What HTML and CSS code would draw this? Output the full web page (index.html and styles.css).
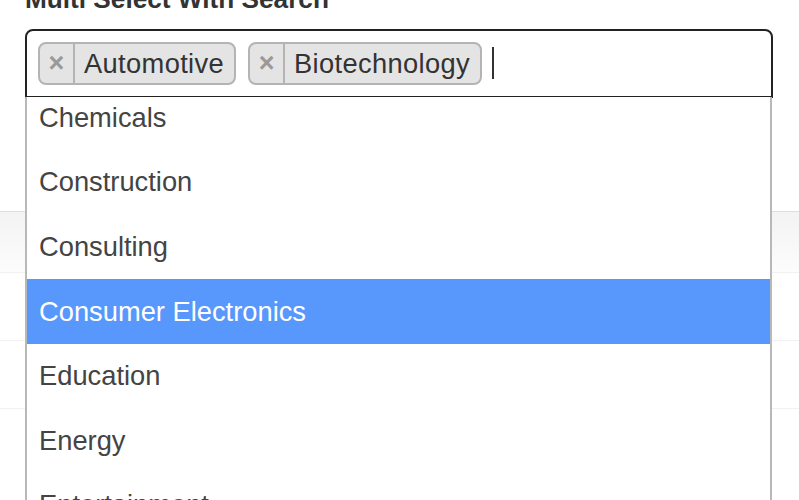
FILE: index.html
```html
<!DOCTYPE html>
<html lang="en">
<head>
<meta charset="utf-8">
<title>Multi Select With Search</title>
<link rel="stylesheet" href="styles.css">
</head>
<body>
<div class="page">
  <label class="field-label">Multi Select With Search</label>
  <div class="select">
    <div class="selection">
      <span class="chip"><span class="chip-remove">×</span><span class="chip-text">Automotive</span></span>
      <span class="chip"><span class="chip-remove">×</span><span class="chip-text">Biotechnology</span></span>
      <span class="caret"></span>
    </div>
    <div class="dropdown">
      <ul class="options">
        <li class="option">Chemicals</li>
        <li class="option">Construction</li>
        <li class="option">Consulting</li>
        <li class="option highlighted">Consumer Electronics</li>
        <li class="option">Education</li>
        <li class="option">Energy</li>
        <li class="option">Entertainment</li>
      </ul>
    </div>
  </div>
  <div class="table">
    <div class="row head"></div>
    <div class="row"></div>
    <div class="row"></div>
    <div class="row"></div>
  </div>
</div>
</body>
</html>
```

FILE: styles.css
```css
html, body {
  margin: 0;
  padding: 0;
  background: #fff;
  overflow: hidden;
}
body {
  font-family: "Liberation Sans", Arial, sans-serif;
  color: #333;
  width: 799px;
  height: 500px;
}
.page {
  position: relative;
  height: 500px;
  overflow: hidden;
}
.field-label {
  display: block;
  margin: -16px 0 0 25px;
  font-size: 26.2px;
  font-weight: bold;
  line-height: 30px;
  height: 30px;
  color: #333;
}
.select {
  position: relative;
  margin: 15px 0 0 25px;
  width: 748px;
  z-index: 2;
}
.selection {
  box-sizing: border-box;
  height: 68.5px;
  border: 2px solid #222;
  border-radius: 8px 8px 0 0;
  background: #fff;
  display: flex;
  align-items: center;
  gap: 12px;
  padding-left: 11px;
}
.chip {
  box-sizing: border-box;
  display: flex;
  align-items: stretch;
  height: 43px;
  margin-top: 1px;
  border: 2px solid #b4b4b4;
  border-radius: 8px;
  background: #e4e4e4;
}
.chip-remove {
  width: 33px;
  border-right: 2px solid #b4b4b4;
  display: flex;
  align-items: center;
  justify-content: center;
  color: #999;
  font-weight: bold;
  font-size: 27px;
  line-height: 1;
}
.chip-text {
  display: flex;
  align-items: center;
  padding: 0 10px 0 9px;
  font-size: 27.3px;
  letter-spacing: 0.35px;
  color: #333;
}
.caret {
  width: 2px;
  height: 32px;
  background: #333;
  margin-left: -2px;
}
.dropdown {
  position: absolute;
  left: 0;
  top: 68px;
  box-sizing: border-box;
  width: 747px;
  height: 440px;
  border: 2px solid #b8b8b8;
  border-top: none;
  background: #fff;
  overflow: hidden;
}
.options {
  list-style: none;
  margin: -11.5px 0 0 0;
  padding: 0;
}
.option {
  height: 64.6px;
  display: flex;
  align-items: center;
  padding: 0 12px;
  font-size: 27.3px;
  color: #444;
}
.option.highlighted {
  background: #5897fb;
  color: #fff;
}
.table {
  margin-top: 113px;
}
.row {
  box-sizing: border-box;
  height: 68px;
  border-top: 1px solid #f1f1f1;
}
.row.head {
  height: 61px;
  border-top: 1px solid #dedede;
  background: linear-gradient(#f3f3f3, #fcfcfc);
}
```
